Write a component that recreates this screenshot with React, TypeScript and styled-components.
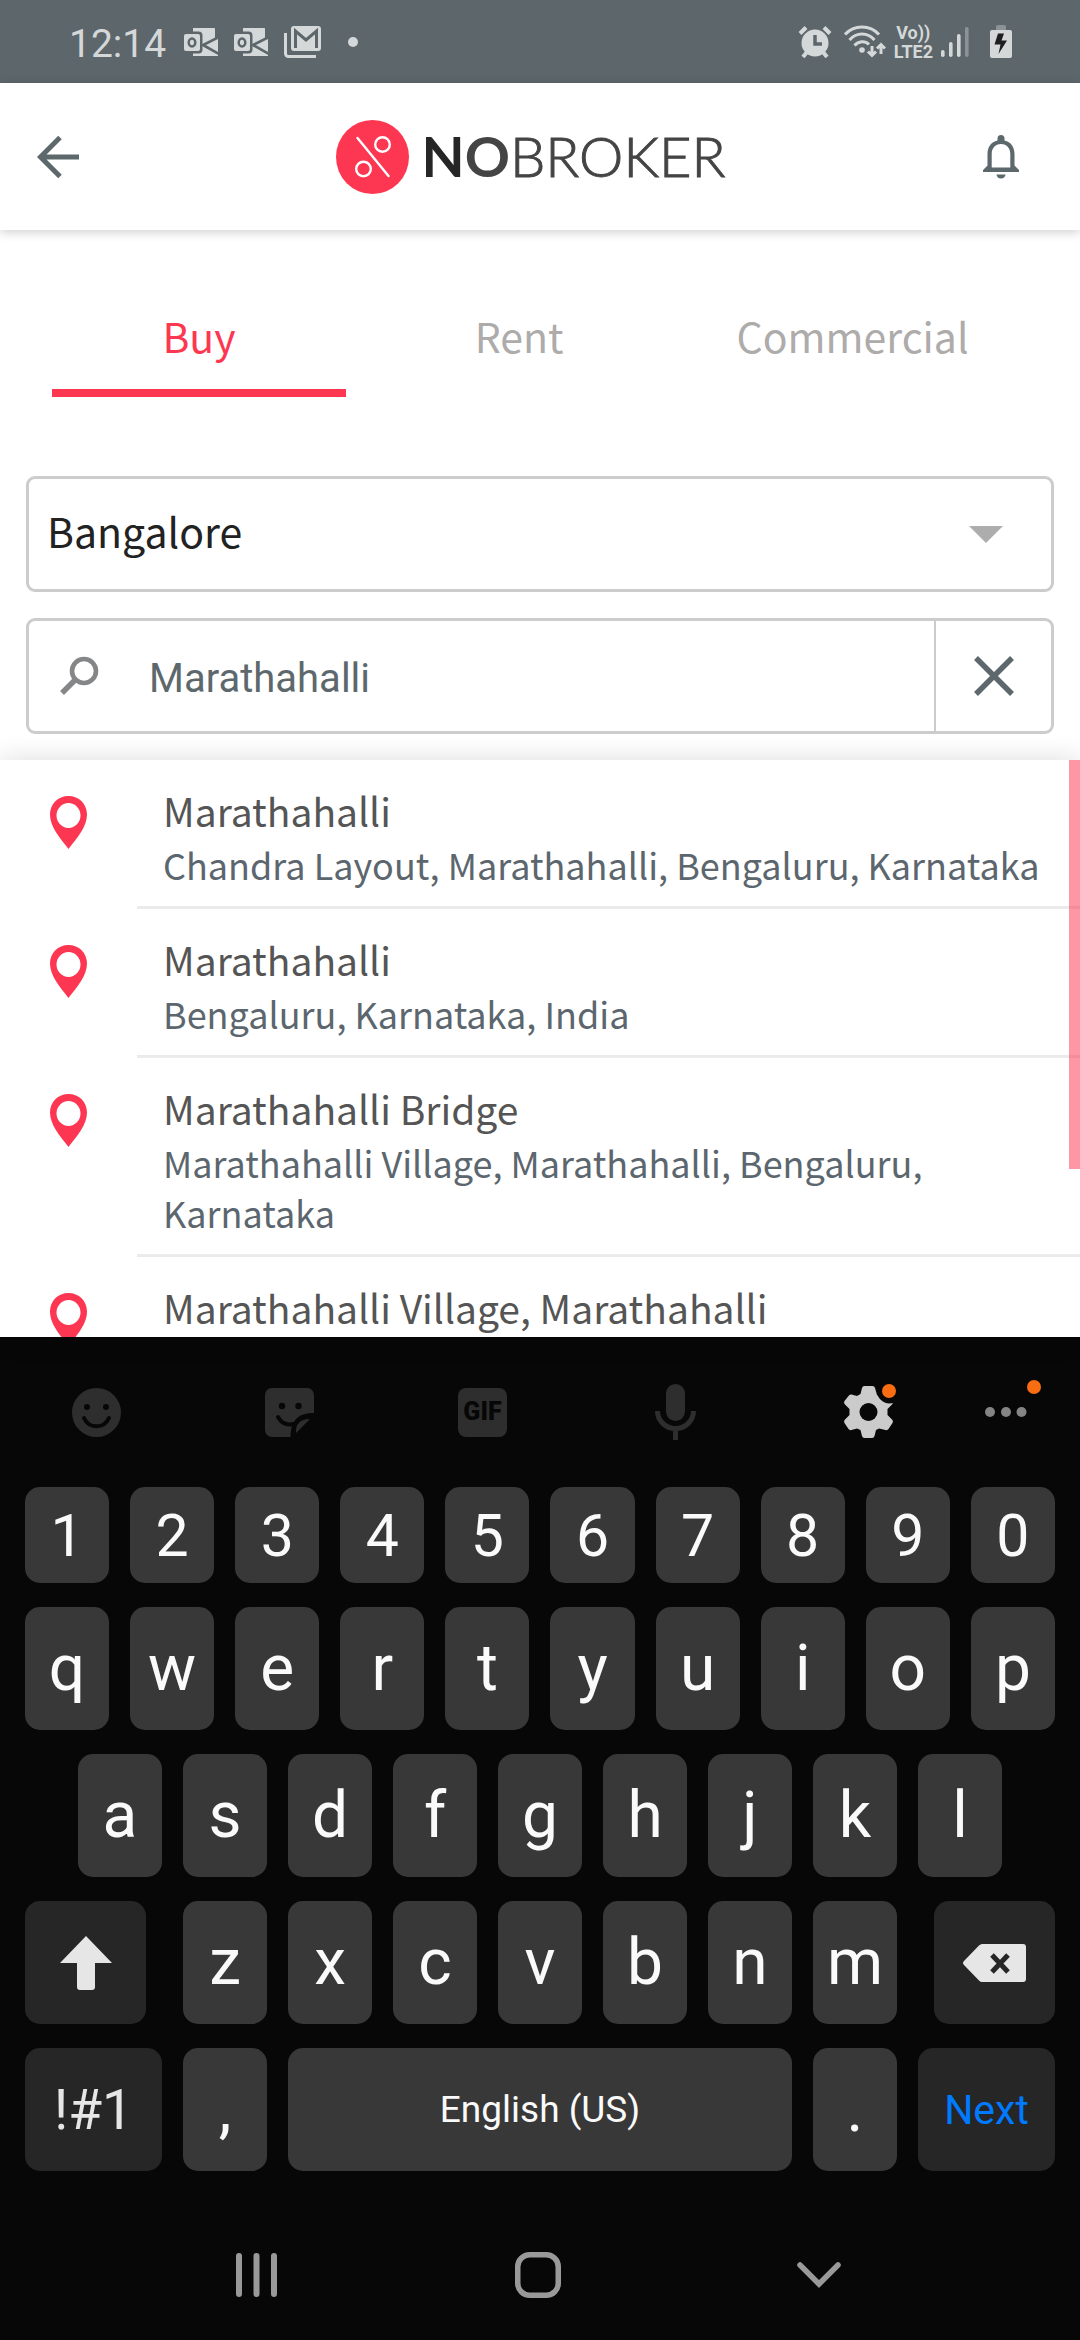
import React, { useState } from "react";
import styled, { createGlobalStyle, css } from "styled-components";

const ACCENT = "#fd3752";
const SLATE = "#5d686c";
const STATUS = "#d5d8d9";
const STATUS_BG = "#5d676b";
const SOURCE = `"Noto Sans CJK SC", "Noto Sans", sans-serif`;
const ROBOTO = `Roboto, "Liberation Sans", sans-serif`;

const GlobalStyle = createGlobalStyle`
  * { box-sizing: border-box; }
  body { margin: 0; background: #fff; font-family: ${SOURCE}; }
  button, input, select { font: inherit; color: inherit; background: none; border: 0; padding: 0; margin: 0; }
  svg { display: block; }
`;

const Screen = styled.div`
  display: flex;
  flex-direction: column;
  height: 100vh;
  overflow: hidden;
`;

const StatusBar = styled.div`
  display: flex;
  align-items: center;
  justify-content: space-between;
  flex: none;
  height: 83px;
  padding: 0 68px 0 69px;
  background: ${STATUS_BG};
  color: ${STATUS};
  font-family: ${ROBOTO};
`;

const Clock = styled.time`
  font-size: 39px;
  line-height: 48px;
  padding-top: 4px;
  margin-right: 3px;
`;

const StatusGroup = styled.div<{ $gap: number }>`
  display: flex;
  align-items: center;
  gap: ${(p) => p.$gap}px;
`;

const MoreDot = styled.span`
  width: 10px;
  height: 10px;
  margin-left: 12px;
  border-radius: 50%;
  background: ${STATUS};
`;

const Volte = styled.div`
  display: flex;
  flex-direction: column;
  align-items: center;
  font-size: 18px;
  line-height: 19px;
  font-weight: 700;
`;

const BatterySlot = styled.div`
  padding-left: 13px;
`;

const Header = styled.header`
  position: relative;
  z-index: 1;
  display: grid;
  grid-template-columns: 115px 1fr 110px;
  align-items: center;
  flex: none;
  height: 147px;
  padding-right: 24px;
  background: #fff;
  box-shadow: 0 2px 10px rgba(0, 0, 0, 0.2);
`;

const IconButton = styled.button`
  display: flex;
  align-items: center;
  justify-content: center;
  height: 100%;
  width: 100%;
`;

const Brand = styled.div`
  display: flex;
  align-items: center;
  justify-content: center;
  gap: 13px;
`;

const Wordmark = styled.span`
  font-family: Lato, sans-serif;
  font-size: 56px;
  line-height: 72px;
  padding-bottom: 2px;
  font-weight: 300;
  color: #444;
  -webkit-text-stroke: 1px currentColor;
  b { font-weight: 700; color: #444; -webkit-text-stroke: 0; }
  b:first-child { color: #262626; }
`;

const Tabs = styled.nav`
  display: grid;
  grid-template-columns: 11fr 11fr 12fr;
  column-gap: 26px;
  flex: none;
  padding: 66px 67px 0 52px;
`;

const Tab = styled.button<{ $active: boolean }>`
  height: 101px;
  padding-bottom: 16px;
  border-bottom: 8px solid ${(p) => (p.$active ? ACCENT : "transparent")};
  color: ${(p) => (p.$active ? ACCENT : "#aeabab")};
  font-size: 41px;
  line-height: 60px;
`;

const Form = styled.form`
  display: flex;
  flex-direction: column;
  gap: 26px;
  flex: none;
  padding: 79px 26px 26px;
`;

const fieldBox = css`
  display: flex;
  align-items: center;
  height: 116px;
  border: 3px solid #ccc;
  border-radius: 9px;
  background: #fff;
`;

const CityField = styled.label`
  ${fieldBox}
  padding-right: 48px;
`;

const CitySelect = styled.select`
  appearance: none;
  flex: 1;
  height: 100%;
  padding: 0 0 8px 18px;
  color: #222;
  font-size: 41px;
  outline: none;
`;

const SearchField = styled.div`
  ${fieldBox}
  color: ${SLATE};
`;

const SearchLabel = styled.label`
  display: flex;
  align-items: center;
  flex: 1;
  height: 100%;
  padding-left: 30px;
  gap: 50px;
`;

const SearchInput = styled.input`
  flex: 1;
  min-width: 0;
  height: 100%;
  padding-top: 4px;
  font-family: ${ROBOTO};
  font-size: 40px;
  outline: none;
`;

const ClearButton = styled(IconButton)`
  width: 117px;
  border-left: 2px solid #ccc;
`;

const Results = styled.div`
  position: relative;
  flex: 1;
  min-height: 0;
  background: #fff;
  box-shadow: 0 0 26px rgba(0, 0, 0, 0.14);
`;

const ResultList = styled.ul`
  height: 100%;
  margin: 0;
  padding: 0;
  overflow: hidden;
  list-style: none;
`;

const ScrollThumb = styled.div`
  position: absolute;
  top: 0;
  right: 0;
  width: 11px;
  height: 409px;
  background: ${ACCENT};
  opacity: 0.52;
`;

const Result = styled.li`
  display: grid;
  grid-template-columns: 137px 1fr;
`;

const PinCell = styled.div`
  display: flex;
  justify-content: center;
  padding-top: 36px;
`;

const ResultText = styled.div`
  padding: 21px 24px 17px 26px;
  border-bottom: 3px solid #ebebeb;
`;

const ResultTitle = styled.div`
  color: #555;
  font-size: 39px;
  line-height: 58px;
`;

const ResultSub = styled.div`
  color: #5c666e;
  font-size: 36px;
  line-height: 50px;
`;

const Keyboard = styled.section`
  flex: none;
  background: #070707;
  color: #fafafa;
  font-family: ${ROBOTO};
`;

const Toolbar = styled.div`
  display: grid;
  grid-template-columns: repeat(5, 1fr) 82px;
  height: 150px;
  padding-right: 33px;
`;

const GifLabel = styled.span`
  display: flex;
  align-items: center;
  justify-content: center;
  width: 49px;
  height: 49px;
  border-radius: 8px;
  background: #2e2e2e;
  color: #070707;
  font-size: 25px;
  line-height: 28px;
  font-weight: 900;
`;

const Badged = styled.span`
  position: relative;
`;

const Badge = styled.span<{ $top: number; $right: number }>`
  position: absolute;
  top: ${(p) => p.$top}px;
  right: ${(p) => p.$right}px;
  width: 14px;
  height: 14px;
  border-radius: 50%;
  background: #f86d12;
`;

const Keys = styled.div`
  display: flex;
  flex-direction: column;
  gap: 24px;
  padding: 0 25px;
`;

const KeyRow = styled.div<{ $inset?: boolean }>`
  display: flex;
  gap: 21px;
  padding: 0 ${(p) => (p.$inset ? 53 : 0)}px;
`;

const Key = styled.button<{
  $grow?: number;
  $short?: boolean;
  $dark?: boolean;
  $size?: number;
  $gap?: "left" | "right";
}>`
  display: flex;
  align-items: center;
  justify-content: center;
  flex: ${(p) => p.$grow ?? 84} 1 0;
  min-width: 0;
  height: ${(p) => (p.$short ? 96 : 123)}px;
  margin-left: ${(p) => (p.$gap === "left" ? 16 : 0)}px;
  margin-right: ${(p) => (p.$gap === "right" ? 16 : 0)}px;
  border-radius: 15px;
  background: ${(p) => (p.$dark ? "#262626" : "#383838")};
  color: ${(p) => (p.$dark ? "#e6e6e6" : "#fafafa")};
  font-size: ${(p) => p.$size ?? 64}px;
`;

const NextKey = styled(Key)`
  color: #007aff;
`;

const NavBar = styled.nav`
  display: grid;
  grid-template-columns: repeat(3, 1fr);
  height: 169px;
  padding: 39px 120px 0 116px;
`;

const Outlook = () => (
  <svg width="35" height="28" viewBox="0 0 35 28">
    <path d="M9 0h21a2 2 0 0 1 2 2v9l2-1v18H9z" fill={STATUS} />
    <path d="M36 8.500L19 17 36 26.500" fill="none" stroke={STATUS_BG} strokeWidth="2.600" />
    <path d="M31 0h5v9l-5 2.500z" fill={STATUS_BG} />
    <rect x="-2" y="3.500" width="20.500" height="22" rx="4" fill={STATUS_BG} />
    <rect x="0" y="6" width="16" height="17" rx="2" fill={STATUS} />
    <ellipse cx="8" cy="14.500" rx="3.300" ry="4" fill="none" stroke={STATUS_BG} strokeWidth="2.500" />
  </svg>
);

const GmailStack = () => (
  <svg width="37" height="32" viewBox="0 0 37 32">
    <path d="M1.500 7v20.500a3 3 0 0 0 3 3H32" fill="none" stroke={STATUS} strokeWidth="3" />
    <rect x="7" y="0" width="30" height="25" rx="3" fill={STATUS} />
    <path d="M11.500 22V5L22 14 32.500 5v17" fill="none" stroke={STATUS_BG} strokeWidth="3" />
  </svg>
);

const Alarm = () => (
  <svg width="34" height="32" viewBox="0 0 34 32" stroke={STATUS} fill="none">
    <circle cx="17" cy="17" r="13.500" fill={STATUS} stroke="none" />
    <path d="M2 7.500l6-6M32 7.500l-6-6" strokeWidth="4" />
    <path d="M9 26l-4 5M25 26l4 5" strokeWidth="4" />
    <path d="M17 9v9h7" stroke={STATUS_BG} strokeWidth="3.500" />
  </svg>
);

const Wifi = () => (
  <svg width="42" height="33" viewBox="0 0 42 33" fill="none" stroke={STATUS}>
    <path
      d="M1 9.500C10 -0.500 26 -0.500 35 9.500M5.500 15C12.500 7 23.500 7 30.500 15M10.500 20.500C14.500 16 21 15.500 25 19.500"
      strokeWidth="3"
    />
    <circle cx="18" cy="25" r="2.800" fill={STATUS} stroke="none" />
    <path d="M28 21v9M24 26.500l4 4 4-4M37 29v-9M33 23.500l4-4 4 4" strokeWidth="3" />
  </svg>
);

const Signal = () => (
  <svg width="28" height="32" viewBox="0 0 28 32" fill={STATUS}>
    <rect x="0" y="24" width="3.600" height="7" rx="1.800" />
    <rect x="8" y="16" width="3.600" height="15" rx="1.800" />
    <rect x="16" y="8" width="3.600" height="23" rx="1.800" />
    <rect x="24" y="1" width="3.600" height="30" rx="1.800" opacity="0.4" />
  </svg>
);

const Battery = () => (
  <svg width="22" height="33" viewBox="0 0 22 33">
    <path d="M6 5V2q0-2 2-2h6q2 0 2 2v3z" fill={STATUS} opacity="0.4" />
    <rect y="5" width="22" height="28" rx="2" fill={STATUS} />
    <path d="M8 8.500h6l-2.500 7H17L8.500 29l2-9.500H4.500z" fill="#1d1f20" />
  </svg>
);

const BackArrow = () => (
  <svg width="42" height="44" viewBox="0 0 42 44" fill="none" stroke={SLATE} strokeWidth="5">
    <path d="M42 22H4M23 2.500L3.500 22 23 41.500" />
  </svg>
);

const Bell = () => (
  <svg width="36" height="44" viewBox="0 0 36 44">
    <path
      d="M18 0a3.500 3.500 0 0 1 3.500 3.500V5.500C28 7 31.500 12 31.500 19v11.500l4.500 4.500V37H0v-2l4.500-4.500V19C4.500 12 8 7 14.500 5.500V3.500A3.500 3.500 0 0 1 18 0zM18 9c-6 0-9.300 4.500-9.300 10v13.500h18.600V19C27.300 13.500 24 9 18 9z"
      fill={SLATE}
      fillRule="evenodd"
    />
    <path d="M13.500 39.500h9a4.500 4 0 0 1-9 0z" fill={SLATE} />
  </svg>
);

const LogoMark = () => (
  <svg width="73" height="74" viewBox="0 0 73 74" fill="none" stroke="#fff" strokeWidth="2.400">
    <ellipse cx="36.500" cy="37" rx="36.500" ry="37" fill={ACCENT} stroke="none" />
    <path d="M21.500 18L52.500 56" strokeLinecap="round" />
    <circle cx="46.500" cy="24.500" r="7.300" />
    <circle cx="27.500" cy="49" r="7.300" />
  </svg>
);

const Caret = () => (
  <svg width="34" height="17" viewBox="0 0 34 17">
    <path d="M0 0h34L17 17z" fill="#adadad" />
  </svg>
);

const Magnifier = () => (
  <svg width="40" height="40" viewBox="0 0 40 40" fill="none" stroke="#858688">
    <circle cx="25" cy="15" r="12" strokeWidth="4.600" />
    <path d="M15.500 24.500L3 37" strokeWidth="5.500" />
  </svg>
);

const Cross = () => (
  <svg width="40" height="40" viewBox="0 0 40 40" fill="none" stroke={SLATE} strokeWidth="5.500">
    <path d="M2 2l36 36M38 2L2 38" />
  </svg>
);

const Pin = () => (
  <svg width="37" height="53" viewBox="0 0 37 53">
    <path
      d="M18.500 0C8 0 0 8 0 18.500 0 31 10 42 18.500 53 27 42 37 31 37 18.500 37 8 29 0 18.500 0zM18.500 7a12 12.500 0 1 1 0 25 12 12.500 0 0 1 0-25z"
      fill={ACCENT}
      fillRule="evenodd"
    />
  </svg>
);

const Smiley = () => (
  <svg width="49" height="49" viewBox="0 0 49 49">
    <circle cx="24.500" cy="24.500" r="24.500" fill="#2e2e2e" />
    <circle cx="15" cy="19" r="3" fill="#070707" />
    <circle cx="34" cy="19" r="3" fill="#070707" />
    <path d="M12 30c5 11 20 11 25 0" fill="none" stroke="#070707" strokeWidth="4" strokeLinecap="round" />
  </svg>
);

const Sticker = () => (
  <svg width="49" height="49" viewBox="0 0 49 49">
    <path d="M7 0h35a7 7 0 0 1 7 7v18C34 25 26 31 25.500 49H7a7 7 0 0 1-7-7V7a7 7 0 0 1 7-7z" fill="#2e2e2e" />
    <path d="M45 31L31 45c-.5-9 4-14 14-14z" fill="#2e2e2e" />
    <circle cx="17" cy="18" r="3.200" fill="#070707" />
    <circle cx="33.500" cy="18" r="3.200" fill="#070707" />
    <path d="M13 29c4 7 9 8.500 15 7" fill="none" stroke="#070707" strokeWidth="4" strokeLinecap="round" />
  </svg>
);

const Mic = () => (
  <svg width="41" height="56" viewBox="0 0 41 56">
    <rect x="11" width="19" height="37" rx="9.500" fill="#2e2e2e" />
    <path d="M2.500 27a18 17.500 0 0 0 36 0M20.500 45v11" fill="none" stroke="#2e2e2e" strokeWidth="5" />
  </svg>
);

const Gear = () => (
  <svg width="49" height="52" viewBox="0 0 49 52">
    <path
      d="M18 2q.5-2 2.500-2h8q2 0 2.500 2l2 7 3.500 2 7-1.500q2-.5 3 1.500l2 4q1 2-.5 3.500L43.500 23v6l4.500 4.500q1.500 1.500.5 3.500l-4 6q-1 1.500-3 1l-6.500-1.500L32 44l-1.500 6q-.5 2-2.500 2h-7.500q-2 0-2.500-2l-1.500-6-3.500-1.500L7.500 44q-2 .5-3-1l-4-6q-1-2 .5-3.500L5.500 29v-6L1 18.500Q-.5 17 .5 15l4-5q1-2 3-1.500L13 10l3.500-2z"
      fill="#cbcbcb"
    />
    <circle cx="24.500" cy="26" r="9" fill="#070707" />
    <circle cx="45.500" cy="5" r="12.500" fill="#070707" />
  </svg>
);

const More = () => (
  <svg width="42" height="10" viewBox="0 0 42 10" fill="#848484">
    <circle cx="5" cy="5" r="5" />
    <circle cx="21" cy="5" r="5" />
    <circle cx="36.500" cy="5" r="5" />
  </svg>
);

const Shift = () => (
  <svg width="52" height="54" viewBox="0 0 52 54">
    <path d="M26 0l26 27H35v24q0 3-3 3H20q-3 0-3-3V27H0z" fill="#e6e6e6" />
  </svg>
);

const Backspace = () => (
  <svg width="63" height="38" viewBox="0 0 63 38">
    <path d="M19 0h41q3 0 3 3v32q0 3-3 3H19q-1.500 0-3-1.500L1 21q-2-2 0-4L16 1.500Q17.500 0 19 0z" fill="#e6e6e6" />
    <path d="M29 11l16 17M45 11L29 28" stroke="#262626" strokeWidth="5" />
  </svg>
);

const Recents = () => (
  <svg width="41" height="44" viewBox="0 0 41 44" fill="#999">
    <rect x="0" width="6" height="44" rx="3" />
    <rect x="17.500" width="6" height="44" rx="3" />
    <rect x="35" width="6" height="44" rx="3" />
  </svg>
);

const Home = () => (
  <svg width="46" height="46" viewBox="0 0 46 46" fill="none" stroke="#999" strokeWidth="5.500">
    <rect x="2.750" y="2.750" width="40.500" height="40.500" rx="12" />
  </svg>
);

const Down = () => (
  <svg width="44" height="26" viewBox="0 0 44 26" fill="none" stroke="#999" strokeWidth="5.500">
    <path d="M3 3l19 19L41 3" strokeLinecap="round" />
  </svg>
);

const RESULTS = [
  { title: "Marathahalli", sub: "Chandra Layout, Marathahalli, Bengaluru, Karnataka" },
  { title: "Marathahalli", sub: "Bengaluru, Karnataka, India" },
  { title: "Marathahalli Bridge", sub: "Marathahalli Village, Marathahalli, Bengaluru, Karnataka" },
  { title: "Marathahalli Village, Marathahalli" },
];

export default function App() {
  const [tab, setTab] = useState("Buy");
  const [query, setQuery] = useState("Marathahalli");

  return (
    <>
      <GlobalStyle />
      <Screen>
        <StatusBar>
          <StatusGroup $gap={15}>
            <Clock>12:14</Clock>
            <Outlook />
            <Outlook />
            <GmailStack />
            <MoreDot />
          </StatusGroup>
          <StatusGroup $gap={8}>
            <StatusGroup $gap={12}>
              <Alarm />
              <Wifi />
            </StatusGroup>
            <Volte>
              <span>Vo))</span>
              <span>LTE2</span>
            </Volte>
            <Signal />
            <BatterySlot>
              <Battery />
            </BatterySlot>
          </StatusGroup>
        </StatusBar>

        <Header>
          <IconButton aria-label="Back">
            <BackArrow />
          </IconButton>
          <Brand>
            <LogoMark />
            <Wordmark>
              <b>N</b>
              <b>O</b>BROKER
            </Wordmark>
          </Brand>
          <IconButton aria-label="Notifications">
            <Bell />
          </IconButton>
        </Header>

        <Tabs>
          {["Buy", "Rent", "Commercial"].map((name) => (
            <Tab key={name} $active={tab === name} onClick={() => setTab(name)}>
              {name}
            </Tab>
          ))}
        </Tabs>

        <Form onSubmit={(e) => e.preventDefault()}>
          <CityField>
            <CitySelect aria-label="City" defaultValue="Bangalore">
              <option>Bangalore</option>
            </CitySelect>
            <Caret />
          </CityField>
          <SearchField>
            <SearchLabel>
              <Magnifier />
              <SearchInput aria-label="Locality" value={query} onChange={(e) => setQuery(e.target.value)} />
            </SearchLabel>
            <ClearButton type="button" aria-label="Clear" onClick={() => setQuery("")}>
              <Cross />
            </ClearButton>
          </SearchField>
        </Form>

        <Results>
          <ResultList>
            {RESULTS.map((r, i) => (
              <Result key={i}>
                <PinCell>
                  <Pin />
                </PinCell>
                <ResultText>
                  <ResultTitle>{r.title}</ResultTitle>
                  {r.sub && <ResultSub>{r.sub}</ResultSub>}
                </ResultText>
              </Result>
            ))}
          </ResultList>
          <ScrollThumb />
        </Results>

        <Keyboard>
          <Toolbar>
            <IconButton aria-label="Emoji">
              <Smiley />
            </IconButton>
            <IconButton aria-label="Stickers">
              <Sticker />
            </IconButton>
            <IconButton>
              <GifLabel>GIF</GifLabel>
            </IconButton>
            <IconButton aria-label="Voice input">
              <Mic />
            </IconButton>
            <IconButton aria-label="Settings">
              <Badged>
                <Gear />
                <Badge $top={-2} $right={-3} />
              </Badged>
            </IconButton>
            <IconButton aria-label="More">
              <Badged>
                <More />
                <Badge $top={-27} $right={-14} />
              </Badged>
            </IconButton>
          </Toolbar>

          <Keys>
            <KeyRow>
              {[..."1234567890"].map((k) => (
                <Key key={k} $short $size={59}>
                  {k}
                </Key>
              ))}
            </KeyRow>
            <KeyRow>
              {[..."qwertyuiop"].map((k) => (
                <Key key={k}>{k}</Key>
              ))}
            </KeyRow>
            <KeyRow $inset>
              {[..."asdfghjkl"].map((k) => (
                <Key key={k}>{k}</Key>
              ))}
            </KeyRow>
            <KeyRow>
              <Key $dark $grow={121} $gap="right" aria-label="Shift">
                <Shift />
              </Key>
              {[..."zxcvbnm"].map((k) => (
                <Key key={k}>{k}</Key>
              ))}
              <Key $dark $grow={121} $gap="left" aria-label="Backspace">
                <Backspace />
              </Key>
            </KeyRow>
            <KeyRow>
              <Key $dark $grow={137} $size={55}>
                !#1
              </Key>
              <Key>,</Key>
              <Key $grow={504} $size={37}>
                English (US)
              </Key>
              <Key>.</Key>
              <NextKey $dark $grow={137} $size={41}>
                Next
              </NextKey>
            </KeyRow>
          </Keys>

          <NavBar>
            <IconButton aria-label="Recent apps">
              <Recents />
            </IconButton>
            <IconButton aria-label="Home">
              <Home />
            </IconButton>
            <IconButton aria-label="Hide keyboard">
              <Down />
            </IconButton>
          </NavBar>
        </Keyboard>
      </Screen>
    </>
  );
}
